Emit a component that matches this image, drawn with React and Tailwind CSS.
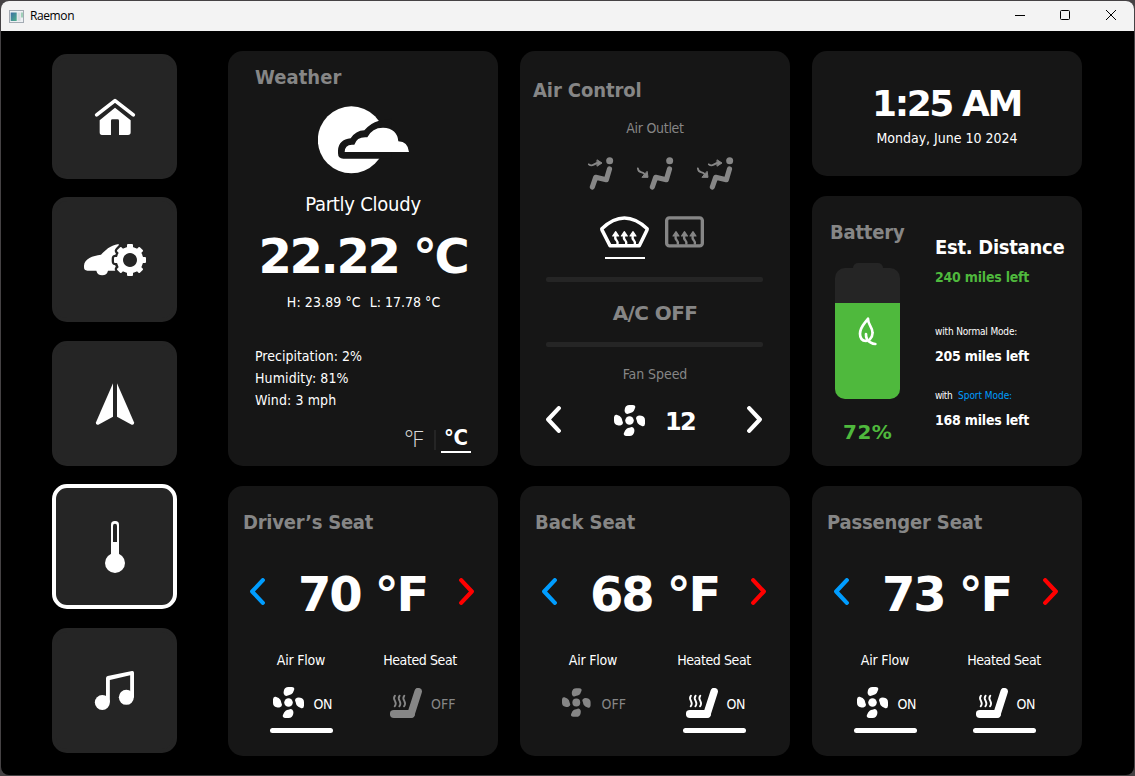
import React from "react";

/* ---------- icons ---------- */

function HomeIcon() {
  return (
    <svg className="size-[117px]" viewBox="168 174 351 351" fill="#fff">
      <path d="M290 344.500 L345 302 L400 344.500" fill="none" stroke="#fff" strokeWidth="11" strokeLinecap="round" strokeLinejoin="round" />
      <path d="M345 323 L392 361 V397 Q392 405 384 405 H357 V362 Q357 358 353 358 H337 Q333 358 333 362 V405 H306 Q299 405 299 397 V361 Z" />
    </svg>
  );
}

const gearTeeth = [0, 45, 90, 135, 180, 225, 270, 315];

function CarSettingsIcon() {
  return (
    <svg className="size-[117px]" viewBox="48 -57 351 351" fill="#fff">
      <path d="M132 137 C133 116 158 107 183 104 C196 92 208 76 236 72 L240 152 H204 A18 18 0 0 1 169 152 H142 Q132 152 132 142 Z" />
      <g fill="#252525" stroke="#252525" strokeWidth="18" strokeLinejoin="round">
        <circle cx="270" cy="120" r="38" />
        {gearTeeth.map((a) => (
          <rect key={a} x="263" y="74" width="14" height="16" rx="3" transform={`rotate(${a} 270 120)`} />
        ))}
      </g>
      <path fillRule="evenodd" d="M270 80 a40 40 0 1 0 0.010 0 Z M270 99 a21 21 0 1 1 -0.010 0 Z" />
      {gearTeeth.map((a) => (
        <rect key={a} x="261" y="72" width="18" height="16" rx="3" transform={`rotate(${a} 270 120)`} />
      ))}
    </svg>
  );
}

function NavigationIcon() {
  return (
    <svg className="size-[117px]" viewBox="48 375 351 351" fill="#fff">
      <path d="M219 490 V590 L175 614 Q166 616 168 607 Z" />
      <path d="M231 490 V590 L275 614 Q284 616 282 607 Z" />
    </svg>
  );
}

function ThermometerIcon() {
  return (
    <svg className="size-[117px]" viewBox="48 24 351 351" fill="#fff">
      <circle cx="225" cy="249" r="30" />
      <rect x="213" y="123" width="24" height="120" rx="11" />
      <path d="M219 186 V137 Q219 131 225 131 Q231 131 231 137 V186 Z" fill="#252525" />
    </svg>
  );
}

function MusicIcon() {
  return (
    <svg className="size-[117px]" viewBox="48 456 351 351" fill="#fff">
      <circle cx="187" cy="667.500" r="22.500" />
      <circle cx="259" cy="652" r="22.500" />
      <path d="M198 595 Q198 589 203 588 L276 573 Q282 572 282 578 V652 H270.500 V586 L209.500 600 V667 H198 Z" />
    </svg>
  );
}

function PartlyCloudyIcon() {
  return (
    <svg className="h-[68px] w-[91px]" viewBox="270 167 273 204" fill="#fff">
      <circle cx="370" cy="268.500" r="100.500" />
      <path d="M453 211 Q427 218 409 240 Q383 241 368 264 Q332 268 330 300 V309 Q330 325 346 325 H490 V205 Z" fill="#161616" />
      <path d="M350 305 Q350 284 372 283 H379 Q387 258 418 261 Q432 232 465 232 Q508 234 511 273 Q540 274 543 305 Z" />
    </svg>
  );
}

function VentIcon({ face, feet }) {
  return (
    <svg className="h-[33px] w-10" viewBox="162 322 120 99" fill="#868686" stroke="#868686" strokeLinecap="round" strokeLinejoin="round">
      <circle cx="269" cy="333.500" r="10.500" stroke="none" />
      <path d="M268.500 358 L259 390 L227 383 L217 412" fill="none" strokeWidth="15.500" />
      {face && (
        <g>
          <path d="M206.500 344 Q213 349.500 221 345 T232 340" fill="none" strokeWidth="5.500" />
          <path d="M232 331 L246 340 L232 349 Z" strokeWidth="3" />
        </g>
      )}
      {feet && (
        <g>
          <path d="M173.500 356 Q175 366 183 367.500 T196 376" fill="none" strokeWidth="5.500" />
          <path d="M201.500 366 L204 383 L187 383 Z" strokeWidth="3" />
        </g>
      )}
    </svg>
  );
}

function HeatArrow({ x }) {
  return (
    <g transform={`translate(${x} 0)`}>
      <path d="M-9 557 L0 544 L9 557 Z" fill="currentColor" strokeWidth="3.500" />
      <path d="M-0.500 557 Q-3 565 2 569 Q7 574 5.500 583" fill="none" strokeWidth="7" />
    </g>
  );
}

function FrontDefrostIcon() {
  return (
    <svg className="h-8 w-[49px] text-white" viewBox="240 497 147 96" fill="none" stroke="currentColor" strokeLinejoin="round">
      <path d="M245.500 535 Q313 471 381.500 535 Q382 538 380 541 L358 586 H270 L247 541 Q245 538 245.500 535 Z" strokeWidth="10.500" />
      <HeatArrow x={287} />
      <HeatArrow x={313} />
      <HeatArrow x={339} />
    </svg>
  );
}

function RearDefrostIcon() {
  return (
    <svg className="h-8 w-[39px] text-[#868686]" viewBox="435 497 117 96" fill="none" stroke="currentColor" strokeLinejoin="round">
      <rect x="440" y="502.500" width="107" height="84" rx="8" strokeWidth="10" />
      <HeatArrow x={468} />
      <HeatArrow x={493.500} />
      <HeatArrow x={519} />
    </svg>
  );
}

function FanIcon({ className }) {
  return (
    <svg className={className} viewBox="282 405 93 93" fill="currentColor">
      <circle cx="328.500" cy="451.500" r="12.800" />
      {[0, 90, 180, 270].map((a) => (
        <path
          key={a}
          transform={`rotate(${a} 328.500 451.500)`}
          d="M314.500 416 Q317 405 328 405 H338 Q347.500 406 345.500 413 Q342 424 337 427 Q333 429 329 429.500 L322 432 Q317 432 314.500 426 Q313 421 314.500 416 Z"
        />
      ))}
    </svg>
  );
}

function ChevronIcon({ className }) {
  return (
    <svg className={className} viewBox="78 408 45 81" fill="none" stroke="currentColor" strokeWidth="12.500" strokeLinecap="round" strokeLinejoin="round">
      <path d="M116.500 414.500 L84.500 448.500 L116.500 482.500" />
    </svg>
  );
}

function SeatIcon({ className }) {
  return (
    <svg className={className} viewBox="486 609 96 90" fill="none" stroke="currentColor" strokeLinecap="round" strokeLinejoin="round">
      <path d="M570.500 620 L549 687" strokeWidth="22.500" />
      <path d="M497.500 687 H549" strokeWidth="23.500" />
      <path d="M501 632 Q495 639 501 648 Q506 657 500 664" strokeWidth="5.500" />
      <path d="M515 632 Q509 639 515 648 Q520 657 514 664" strokeWidth="5.500" />
      <path d="M529 632 Q523 639 529 648 Q534 657 528 664" strokeWidth="5.500" />
    </svg>
  );
}

function LeafIcon() {
  return (
    <svg className="h-[29px] w-[19px]" viewBox="139 365 57 87" fill="none" stroke="#fff" strokeWidth="8" strokeLinecap="round" strokeLinejoin="round">
      <path d="M163 437 C150 436 145 428 145 415 C145 396 156 388 169 370 C168 388 182 393 182.500 412 C183 421 180 427 174 433" />
      <path d="M163 416 Q162 434 176 441 Q184 446 191 446" />
    </svg>
  );
}

function AppIcon() {
  return (
    <svg className="h-[13px] w-[15px]" viewBox="0 0 15 13">
      <defs>
        <linearGradient id="pane" x1="0" y1="0" x2="1" y2="1">
          <stop offset="0" stopColor="#3d6ea5" />
          <stop offset="1" stopColor="#4fb08a" />
        </linearGradient>
      </defs>
      <rect x="0.500" y="0.500" width="14" height="12" fill="#eef1f4" stroke="#a3abb3" />
      <rect x="1.700" y="2.500" width="6" height="8.500" fill="url(#pane)" />
      <rect x="8.500" y="2.500" width="3" height="8.500" fill="#d9dde1" />
      <rect x="12" y="2.500" width="2" height="5" fill="#9fd0b8" />
    </svg>
  );
}

/* ---------- window chrome ---------- */

function TitleBar() {
  return (
    <header className="flex h-[30px] shrink-0 items-center bg-[#f3f3f3] pl-2 text-black">
      <AppIcon />
      <span className="ml-[6px] font-['Open_Sans',sans-serif] text-[12px] leading-4 tracking-[-0.4px]">Raemon</span>
      <div className="ml-auto flex pr-px">
        <svg className="h-[30px] w-[45px]" viewBox="0 0 45 30" stroke="#000" fill="none">
          <path d="M17 14.500 H27" />
        </svg>
        <svg className="h-[30px] w-[45px]" viewBox="0 0 45 30" stroke="#000" fill="none">
          <rect x="17.500" y="9.500" width="9" height="9" rx="1" />
        </svg>
        <svg className="h-[30px] w-[45px]" viewBox="0 0 45 30" stroke="#000" fill="none">
          <path d="M18 9 L28 19 M28 9 L18 19" />
        </svg>
      </div>
    </header>
  );
}

/* ---------- sidebar ---------- */

const navItems = [
  { name: "Home", Icon: HomeIcon, gap: "" },
  { name: "Vehicle", Icon: CarSettingsIcon, gap: "mt-[18px]" },
  { name: "Navigation", Icon: NavigationIcon, gap: "mt-[19px]" },
  { name: "Climate", Icon: ThermometerIcon, gap: "mt-[18px]", active: true },
  { name: "Music", Icon: MusicIcon, gap: "mt-[19px]" },
];

function Sidebar() {
  return (
    <nav className="ml-[51px] mt-[23px] flex w-[125px] shrink-0 flex-col">
      {navItems.map(({ name, Icon, gap, active }) => (
        <button
          key={name}
          className={`${gap} size-[125px] rounded-[15px] border-4 bg-[#252525] ${active ? "border-white" : "border-[#252525]"}`}
        >
          <Icon />
        </button>
      ))}
    </nav>
  );
}

/* ---------- cards ---------- */

function Card({ className, children }) {
  return <section className={`flex flex-col rounded-[15px] bg-[#161616] ${className}`}>{children}</section>;
}

function WeatherCard() {
  return (
    <Card className="h-[415px] pt-[14px]">
      <h2 className="pl-[27px] text-[20px] font-bold leading-6 tracking-[0.05px] text-[#868686]">Weather</h2>
      <div className="mt-[17px] flex justify-center">
        <PartlyCloudyIcon />
      </div>
      <p className="mt-4 text-center text-[20px] leading-7 tracking-[-0.25px]">Partly Cloudy</p>
      <p className="mt-[10px] text-center font-['DejaVu_Sans',sans-serif] text-[48px] font-bold leading-[56px] tracking-[-2.36px]">22.22 °C</p>
      <div className="mt-2 flex justify-center gap-[9px] pl-px text-[14px] leading-5">
        <span className="tracking-[0.1px]">H: 23.89 °C</span>
        <span>L: 17.78 °C</span>
      </div>
      <ul className="mt-[33px] pl-[27px] text-[14px] leading-[22px]">
        <li>Precipitation: 2%</li>
        <li className="tracking-[0.1px]">Humidity: 81%</li>
        <li className="tracking-[0.1px]">Wind: 3 mph</li>
      </ul>
      <div className="mt-[15px] flex pr-[27px] justify-end text-[22px] leading-6">
        <span className="font-['Open_Sans',sans-serif] font-light tracking-[-1.4px] text-[#dcdcdc]">°F</span>
        <span className="ml-[12px] mt-1 h-5 w-[2px] bg-[#252525]" />
        <span className="ml-[5px] h-[27px] w-[30px] border-b-2 border-white pl-[3px] font-bold tracking-[-0.4px]">°C</span>
      </div>
    </Card>
  );
}

function AirControlCard() {
  return (
    <Card className="h-[415px] pt-[27px]">
      <h2 className="pl-[13px] text-[20px] font-bold leading-6 tracking-[-0.1px] text-[#868686]">Air Control</h2>
      <p className="mt-4 text-center text-[14px] leading-5 tracking-[-0.28px] text-[#868686]">Air Outlet</p>
      <div className="mt-[19px] flex gap-5 pl-[54px]">
        <VentIcon face />
        <VentIcon feet />
        <VentIcon face feet />
      </div>
      <div className="mt-[26px] flex gap-4 pl-20">
        <div className="flex flex-col items-center">
          <FrontDefrostIcon />
          <span className="mt-[9px] h-[2px] w-10 bg-white" />
        </div>
        <RearDefrostIcon />
      </div>
      <div className="ml-[26px] mt-[18px] mr-[27px] h-[5px] rounded-[2px] bg-[#252525]" />
      <p className="mt-[18px] h-[26px] text-center font-['DejaVu_Sans',sans-serif] text-[20px] font-bold leading-[26px] tracking-[-0.6px] text-[#868686]">A/C OFF</p>
      <div className="ml-[26px] mt-[16px] mr-[27px] h-[5px] rounded-[2px] bg-[#252525]" />
      <p className="mt-[17px] text-center text-[14px] leading-5 tracking-[-0.06px] text-[#868686]">Fan Speed</p>
      <div className="mt-[21px] flex h-[31px] items-center pl-[26px]">
        <ChevronIcon className="mb-[3px] h-[27px] w-[15px]" />
        <FanIcon className="ml-[53px] size-[31px]" />
        <span className="ml-[20px] mt-[2px] w-[34px] font-['DejaVu_Sans',sans-serif] text-[24px] font-bold leading-7 tracking-[-1.8px]">12</span>
        <ChevronIcon className="mb-[3px] ml-[48px] h-[27px] w-[15px] rotate-180" />
      </div>
    </Card>
  );
}

function ClockCard() {
  return (
    <Card className="h-[125px] items-center pt-8">
      <p className="pr-px font-['DejaVu_Sans',sans-serif] text-[36px] font-bold leading-[42px] tracking-[-2.4px]">1:25 AM</p>
      <p className="mt-[3px] text-[14px] leading-5">Monday, June 10 2024</p>
    </Card>
  );
}

function BatteryCard() {
  return (
    <section className="flex h-[270px] rounded-[15px] bg-[#161616]">
      <div className="flex w-[110px] flex-col pl-[18px] pt-6">
        <h2 className="text-[20px] font-bold leading-6 tracking-[-0.2px] text-[#868686]">Battery</h2>
        <div className="ml-[5px] mt-[19px] flex w-[65px] flex-col items-center">
          <span className="h-[5px] w-[30px] rounded-t-[5px] bg-[#252525]" />
          <div className="flex h-[131px] w-[65px] flex-col justify-end overflow-hidden rounded-[10px] bg-[#252525]">
            <div className="flex h-24 justify-center bg-[#4fb93d] pt-[14px]">
              <LeafIcon />
            </div>
          </div>
        </div>
        <p className="ml-[13px] mt-[21px] font-['DejaVu_Sans',sans-serif] text-[20px] font-bold leading-6 tracking-[0.5px] text-[#4fb93d]">72%</p>
      </div>
      <div className="flex flex-col pl-[13px] pt-[39px]">
        <h3 className="text-[20px] font-bold leading-6 tracking-[-0.28px]">Est. Distance</h3>
        <p className="mt-2 text-[14px] font-bold leading-5 tracking-[-0.22px] text-[#4fb93d]">240 miles left</p>
        <p className="mt-[37px] text-[10px] leading-4 tracking-[-0.16px]">with Normal Mode:</p>
        <p className="mt-[6px] text-[14px] font-bold leading-5 tracking-[-0.22px]">205 miles left</p>
        <p className="mt-[22px] flex gap-[6px] text-[10px] leading-4">
          <span className="tracking-[-0.5px]">with</span>
          <span className="tracking-[-0.05px] text-[#009dff]">Sport Mode:</span>
        </p>
        <p className="mt-[6px] text-[14px] font-bold leading-5 tracking-[-0.22px]">168 miles left</p>
      </div>
    </section>
  );
}

function SeatToggle({ label, labelClass, Icon, iconClass, on }) {
  return (
    <div className="flex w-20 flex-col items-center">
      <p className={`whitespace-nowrap text-[14px] leading-5 ${labelClass}`}>{label}</p>
      <div className={`mt-[17px] flex h-[31px] items-center ${on ? "w-[63px] pl-[3px] text-white" : "w-[66px] pl-[2px] text-[#868686]"}`}>
        <Icon className={iconClass} />
        <span className={`mt-[3px] text-[14px] leading-5 ${on ? "tracking-[-0.4px]" : ""}`}>{on ? "ON" : "OFF"}</span>
      </div>
      {on && <span className="mt-[10px] h-[5px] w-[63px] rounded-[2.5px] bg-white" />}
    </div>
  );
}

function SeatCard({ title, titleClass, temp, airFlow, heated, columnGap }) {
  return (
    <Card className="h-[270px] pt-6">
      <h2 className={`pl-[15px] text-[20px] font-bold leading-6 text-[#868686] ${titleClass}`}>{title}</h2>
      <div className="mt-[32px] flex h-[56px] items-center justify-between pl-[22px] pr-[24px]">
        <ChevronIcon className="mb-[5px] h-[27px] w-[15px] text-[#009dff]" />
        <span className="pl-px font-['DejaVu_Sans',sans-serif] text-[48px] font-bold leading-[56px] tracking-[-2.3px]">{temp} °F</span>
        <ChevronIcon className="mb-[5px] h-[27px] w-[15px] rotate-180 text-[#ff0000]" />
      </div>
      <div className={`mt-[28px] flex pl-[33px] ${columnGap}`}>
        <SeatToggle
          label="Air Flow"
          labelClass="tracking-[-0.2px]"
          Icon={FanIcon}
          iconClass={airFlow ? "mr-[10px] size-[31px]" : "mr-[11px] size-[31px]"}
          on={airFlow}
        />
        <SeatToggle
          label="Heated Seat"
          labelClass="tracking-[-0.4px]"
          Icon={SeatIcon}
          iconClass={heated ? "mr-[9px] h-[30px] w-8" : "ml-px mr-[9px] h-[30px] w-8 shrink-0"}
          on={heated}
        />
      </div>
    </Card>
  );
}

export default function App() {
  return (
    <div className="h-[776px] w-[1135px] overflow-hidden bg-[#454244] p-px font-['DejaVu_Sans_Condensed','DejaVu_Sans',sans-serif] text-white">
      <div className="flex h-full flex-col overflow-hidden rounded-lg bg-black">
        <TitleBar />
        <div className="flex flex-1">
          <Sidebar />
          <main className="ml-[51px] mt-5 grid h-[705px] grid-cols-[270px_270px_270px] grid-rows-[415px_270px] gap-x-[22px] gap-y-5">
            <WeatherCard />
            <AirControlCard />
            <div className="flex flex-col gap-5">
              <ClockCard />
              <BatteryCard />
            </div>
            <SeatCard title="Driver’s Seat" titleClass="tracking-[-0.25px]" temp="70" airFlow heated={false} columnGap="gap-[39px]" />
            <SeatCard title="Back Seat" titleClass="tracking-[-0.04px]" temp="68" airFlow={false} heated columnGap="gap-[41px]" />
            <SeatCard title="Passenger Seat" titleClass="tracking-[-0.16px]" temp="73" airFlow heated columnGap="gap-[39px]" />
          </main>
        </div>
      </div>
    </div>
  );
}
